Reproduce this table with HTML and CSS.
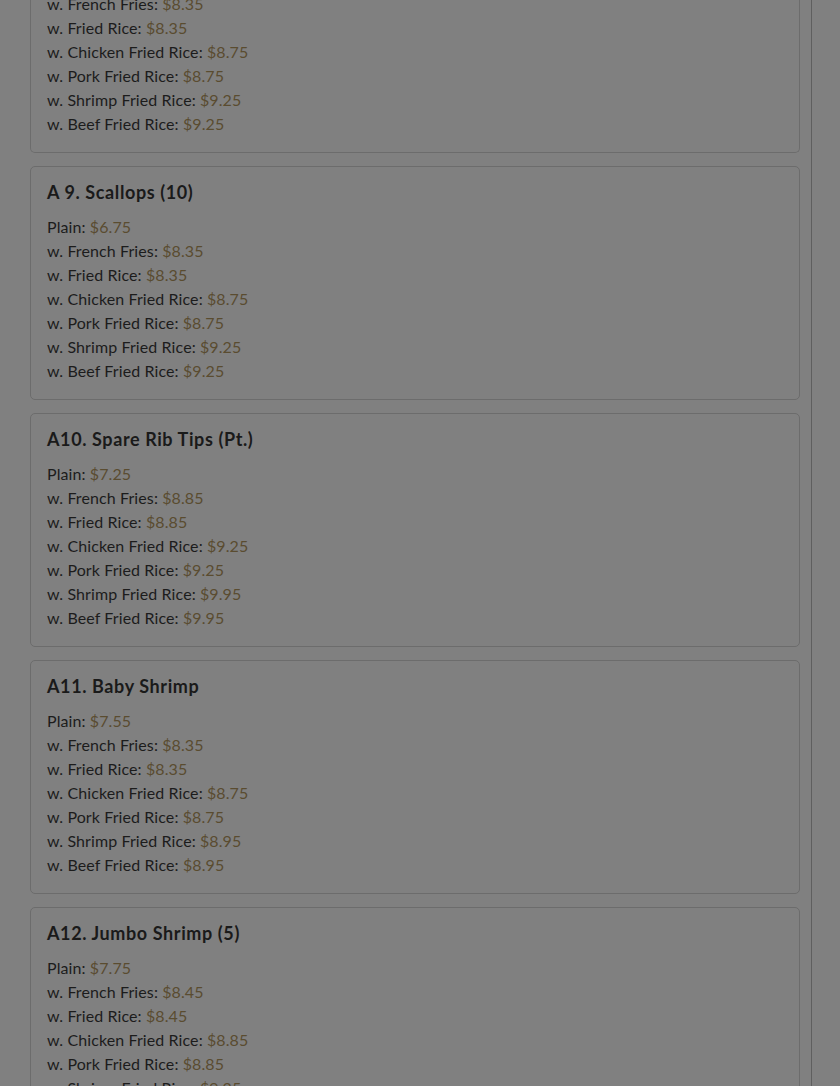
FILE: index.html
```html
<!DOCTYPE html>
<html lang="en">
<head>
<meta charset="utf-8">
<title>Menu</title>
<link rel="stylesheet" href="styles.css">
</head>
<body>
<div class="page">
  <main class="menu">
    <section class="card card--cut">
      <p class="line">w. French Fries: <span class="price">$8.35</span></p>
      <p class="line">w. Fried Rice: <span class="price">$8.35</span></p>
      <p class="line">w. Chicken Fried Rice: <span class="price">$8.75</span></p>
      <p class="line">w. Pork Fried Rice: <span class="price">$8.75</span></p>
      <p class="line">w. Shrimp Fried Rice: <span class="price">$9.25</span></p>
      <p class="line">w. Beef Fried Rice: <span class="price">$9.25</span></p>
    </section>
    <section class="card">
      <h3 class="title">A 9. Scallops (10)</h3>
      <p class="line">Plain: <span class="price">$6.75</span></p>
      <p class="line">w. French Fries: <span class="price">$8.35</span></p>
      <p class="line">w. Fried Rice: <span class="price">$8.35</span></p>
      <p class="line">w. Chicken Fried Rice: <span class="price">$8.75</span></p>
      <p class="line">w. Pork Fried Rice: <span class="price">$8.75</span></p>
      <p class="line">w. Shrimp Fried Rice: <span class="price">$9.25</span></p>
      <p class="line">w. Beef Fried Rice: <span class="price">$9.25</span></p>
    </section>
    <section class="card">
      <h3 class="title">A10. Spare Rib Tips (Pt.)</h3>
      <p class="line">Plain: <span class="price">$7.25</span></p>
      <p class="line">w. French Fries: <span class="price">$8.85</span></p>
      <p class="line">w. Fried Rice: <span class="price">$8.85</span></p>
      <p class="line">w. Chicken Fried Rice: <span class="price">$9.25</span></p>
      <p class="line">w. Pork Fried Rice: <span class="price">$9.25</span></p>
      <p class="line">w. Shrimp Fried Rice: <span class="price">$9.95</span></p>
      <p class="line">w. Beef Fried Rice: <span class="price">$9.95</span></p>
    </section>
    <section class="card">
      <h3 class="title">A11. Baby Shrimp</h3>
      <p class="line">Plain: <span class="price">$7.55</span></p>
      <p class="line">w. French Fries: <span class="price">$8.35</span></p>
      <p class="line">w. Fried Rice: <span class="price">$8.35</span></p>
      <p class="line">w. Chicken Fried Rice: <span class="price">$8.75</span></p>
      <p class="line">w. Pork Fried Rice: <span class="price">$8.75</span></p>
      <p class="line">w. Shrimp Fried Rice: <span class="price">$8.95</span></p>
      <p class="line">w. Beef Fried Rice: <span class="price">$8.95</span></p>
    </section>
    <section class="card">
      <h3 class="title">A12. Jumbo Shrimp (5)</h3>
      <p class="line">Plain: <span class="price">$7.75</span></p>
      <p class="line">w. French Fries: <span class="price">$8.45</span></p>
      <p class="line">w. Fried Rice: <span class="price">$8.45</span></p>
      <p class="line">w. Chicken Fried Rice: <span class="price">$8.85</span></p>
      <p class="line">w. Pork Fried Rice: <span class="price">$8.85</span></p>
      <p class="line">w. Shrimp Fried Rice: <span class="price">$9.25</span></p>
      <p class="line">w. Beef Fried Rice: <span class="price">$9.25</span></p>
    </section>
  </main>
</div>
</body>
</html>
```

FILE: styles.css
```css
html, body {
  margin: 0;
  padding: 0;
  background: #808080;
  height: 100%;
  overflow: hidden;
}

body {
  font-family: Lato, "Noto Sans", sans-serif;
  color: #1c1c1c;
}

.page {
  display: flex;
  margin-top: -8px;
}

.menu {
  width: 770px;
  padding: 0 11px 0 30px;
  border-right: 1px solid #5f5f5f;
  display: flex;
  flex-direction: column;
  gap: 13px;
}

.card {
  border: 1px solid #6c6c6c;
  border-radius: 5px;
  padding: 16px;
  background: #808080;
}

.card--cut {
  border-top: none;
  border-top-left-radius: 0;
  border-top-right-radius: 0;
  padding-top: 0;
}

.title {
  margin: 0 0 14px;
  font-size: 18px;
  line-height: 18px;
  font-weight: 700;
  letter-spacing: 0.6px;
  color: #1a1a1a;
}

.line {
  margin: 0;
  font-size: 16px;
  line-height: 24px;
  letter-spacing: 0.1px;
}

.price {
  color: #5a4c30;
}
```
